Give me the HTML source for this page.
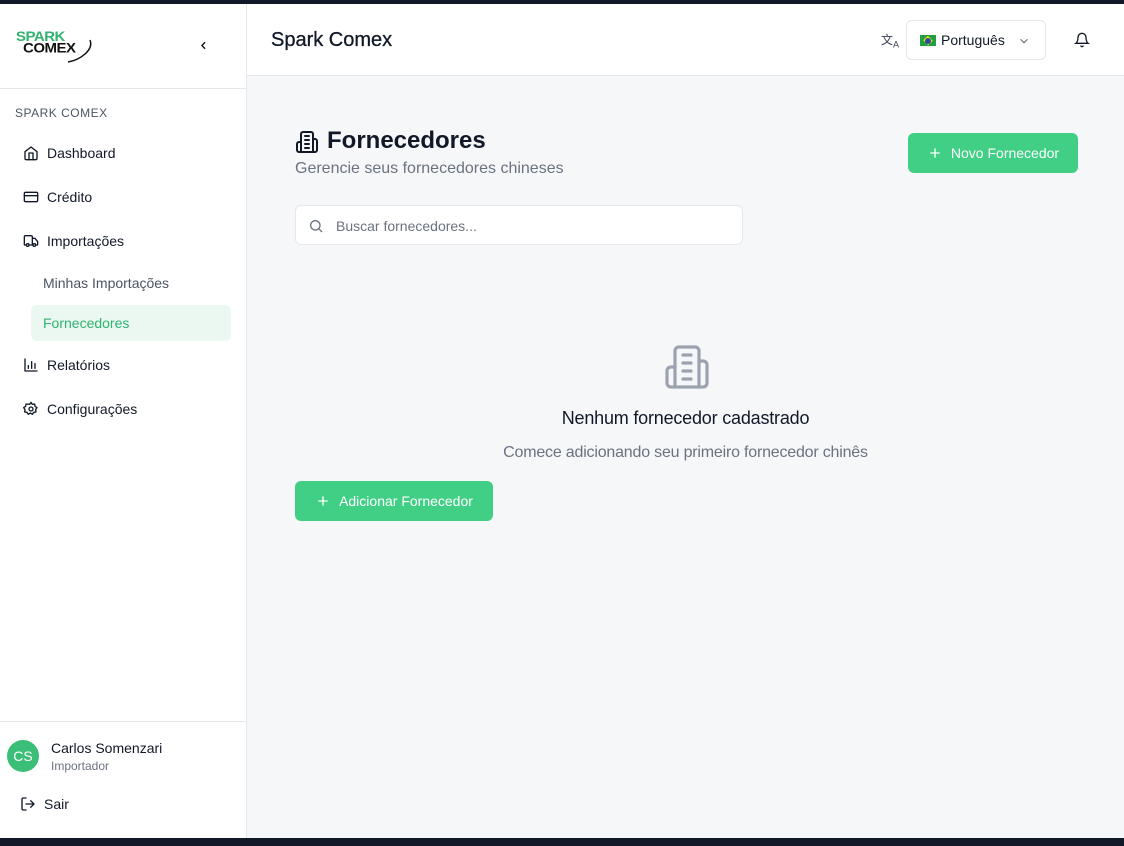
<!DOCTYPE html>
<html><head><meta charset="utf-8">
<style>
*{box-sizing:border-box;margin:0;padding:0}
body{width:1124px;height:846px;overflow:hidden;font-family:"Liberation Sans",Arial,sans-serif;background:#111827;position:relative}
.app{position:absolute;left:0;top:4px;width:1124px;height:834px;background:#f6f7f9}
.side{position:absolute;left:0;top:0;width:247px;height:834px;background:#fff;border-right:1px solid #e5e7eb}
.logo{position:absolute;left:0;top:0;width:247px;height:85px;border-bottom:1px solid #e5e7eb}
.sec{position:absolute;left:15px;top:102px;font-size:12px;color:#4b5563;letter-spacing:.5px}
.nav{position:absolute;left:23px;font-size:14px;color:#111827;display:flex;align-items:center;gap:8px}
.nav svg{width:16px;height:16px;fill:none;stroke:#111827;stroke-width:2;stroke-linecap:round;stroke-linejoin:round}
.sub{position:absolute;left:43px;font-size:14px;color:#4b5563}
.act{position:absolute;left:31px;top:301px;width:200px;height:36px;background:#ebf8f1;border-radius:6px}
.hdr{position:absolute;left:247px;top:0;right:0;height:72px;background:#fff;border-bottom:1px solid #e5e7eb}
.btn{position:absolute;background:#41cf86;color:#fff;font-size:14px;border-radius:6px;display:flex;align-items:center;justify-content:center;gap:8px}
.btn svg{width:16px;height:16px;stroke:#fff;stroke-width:2;fill:none}
</style></head><body>
<div class="app">
<div class="side">
 <div class="logo">
  <div style="position:absolute;left:16px;top:27px;font-weight:900;font-size:15px;line-height:12px;letter-spacing:-.5px;transform:scaleY(.95)">
   <div style="color:#2fb36e">SPARK</div><div style="color:#111;margin-left:7px">COMEX</div>
  </div>
  <svg style="position:absolute;left:62px;top:30px" width="34" height="30" viewBox="0 0 34 30"><path d="M6 28 C18 26 32 16 28 6" stroke="#111" stroke-width="1.5" fill="none"/></svg>
  <svg style="position:absolute;left:197px;top:35px" width="13" height="13" viewBox="0 0 24 24"><path d="M15 18l-6-6 6-6" stroke="#111" stroke-width="2.5" fill="none"/></svg>
 </div>
 <div class="sec">SPARK COMEX</div>
 <div class="nav" style="top:141px"><svg viewBox="0 0 24 24"><path d="M3 10l9-7 9 7v10a2 2 0 0 1-2 2H5a2 2 0 0 1-2-2z"/><path d="M9 22V12h6v10"/></svg>Dashboard</div>
 <div class="nav" style="top:185px"><svg viewBox="0 0 24 24"><rect x="2" y="5" width="20" height="14" rx="2"/><path d="M2 10h20"/></svg>Crédito</div>
 <div class="nav" style="top:229px"><svg viewBox="0 0 24 24"><path d="M14 18V6a2 2 0 0 0-2-2H4a2 2 0 0 0-2 2v11a1 1 0 0 0 1 1h2M15 18H9M19 18h2a1 1 0 0 0 1-1v-3.6a1 1 0 0 0-.2-.6l-3.5-4.4A1 1 0 0 0 17.5 8H14"/><circle cx="17" cy="18" r="2"/><circle cx="7" cy="18" r="2"/></svg>Importações</div>
 <div class="sub" style="top:271px">Minhas Importações</div>
 <div class="act"></div>
 <div class="sub" style="top:311px;color:#2fb36e">Fornecedores</div>
 <div class="nav" style="top:353px"><svg viewBox="0 0 24 24"><path d="M3 3v18h18M8 17v-4M13 17V7M18 17v-7"/></svg>Relatórios</div>
 <div class="nav" style="top:397px"><svg viewBox="0 0 24 24"><circle cx="12" cy="12" r="3"/><path d="M12 2l2 3 3.5-.5.5 3.5 3 2-2 3 .5 3.5-3.5.5-2 3-3-2-3 2-2-3-3.5-.5.5-3.5-2-3 3-2 .5-3.5L10 5z"/></svg>Configurações</div>
 <div style="position:absolute;left:0;top:717px;width:246px;border-top:1px solid #e5e7eb"></div>
 <div style="position:absolute;left:7px;top:736px;width:32px;height:32px;border-radius:50%;background:#3bbf78;color:#fff;font-size:14px;display:flex;align-items:center;justify-content:center">CS</div>
 <div style="position:absolute;left:51px;top:736px;font-size:14px;color:#111827">Carlos Somenzari</div>
 <div style="position:absolute;left:51px;top:755px;font-size:12px;color:#6b7280">Importador</div>
 <div class="nav" style="top:792px;left:20px"><svg viewBox="0 0 24 24"><path d="M9 21H5a2 2 0 0 1-2-2V5a2 2 0 0 1 2-2h4M16 17l5-5-5-5M21 12H9"/></svg>Sair</div>
</div>
<div class="hdr">
 <div style="position:absolute;left:24px;top:25px;font-size:20px;color:#111827;-webkit-text-stroke:.3px #111827">Spark Comex</div>
 <div style="position:absolute;left:634px;top:27px;font-size:12px;color:#374151">文<sub style="font-size:9px">A</sub></div>
 <div style="position:absolute;left:659px;top:16px;width:140px;height:40px;border:1px solid #e5e7eb;border-radius:6px;font-size:14px;color:#111827;display:flex;align-items:center;padding-left:13px;gap:5px">
  <span style="display:inline-block;width:16px;height:11px;background:#229e45;position:relative"><span style="position:absolute;left:3px;top:1px;width:10px;height:9px;background:#f8e509;transform:rotate(45deg) scale(.7)"></span><span style="position:absolute;left:5px;top:3px;width:6px;height:6px;border-radius:50%;background:#2b49a3"></span></span>Português
  <svg style="position:absolute;right:14px;top:13px" width="14" height="14" viewBox="0 0 24 24"><path d="M6 9l6 6 6-6" stroke="#6b7280" stroke-width="2" fill="none"/></svg>
 </div>
 <svg style="position:absolute;left:827px;top:28px" width="16" height="16" viewBox="0 0 24 24" fill="none" stroke="#111827" stroke-width="2" stroke-linecap="round"><path d="M6 8a6 6 0 0 1 12 0c0 7 3 9 3 9H3s3-2 3-9M10.3 21a1.9 1.9 0 0 0 3.4 0"/></svg>
</div>
<svg style="position:absolute;left:295px;top:126px" width="24" height="24" viewBox="0 0 24 24" fill="none" stroke="#111827" stroke-width="2" stroke-linecap="round" stroke-linejoin="round"><path d="M6 22V4a2 2 0 0 1 2-2h8a2 2 0 0 1 2 2v18Z"/><path d="M6 12H4a2 2 0 0 0-2 2v6a2 2 0 0 0 2 2h2M18 9h2a2 2 0 0 1 2 2v9a2 2 0 0 1-2 2h-2M10 6h4M10 10h4M10 14h4M10 18h4"/></svg>
<div style="position:absolute;left:327px;top:123px;font-size:24px;font-weight:bold;color:#111827">Fornecedores</div>
<div style="position:absolute;left:295px;top:156px;font-size:16px;color:#6b7280">Gerencie seus fornecedores chineses</div>
<div class="btn" style="left:908px;top:129px;width:170px;height:40px"><svg viewBox="0 0 24 24"><path d="M12 5v14M5 12h14"/></svg>Novo Fornecedor</div>
<div style="position:absolute;left:295px;top:201px;width:448px;height:40px;background:#fff;border:1px solid #e5e7eb;border-radius:6px;font-size:14px;color:#6b7280;padding:12px 0 0 40px">Buscar fornecedores...
 <svg style="position:absolute;left:12px;top:12px" width="16" height="16" viewBox="0 0 24 24" fill="none" stroke="#6b7280" stroke-width="2"><circle cx="11" cy="11" r="7"/><path d="M21 21l-4.3-4.3"/></svg></div>
<svg style="position:absolute;left:663px;top:339px" width="48" height="48" viewBox="0 0 24 24" fill="none" stroke="#9ca3af" stroke-width="1.6" stroke-linecap="round" stroke-linejoin="round"><path d="M6 22V4a2 2 0 0 1 2-2h8a2 2 0 0 1 2 2v18Z"/><path d="M6 12H4a2 2 0 0 0-2 2v6a2 2 0 0 0 2 2h2M18 9h2a2 2 0 0 1 2 2v9a2 2 0 0 1-2 2h-2M10 6h4M10 10h4M10 14h4M10 18h4"/></svg>
<div style="position:absolute;left:247px;width:877px;top:404px;text-align:center;font-size:18px;color:#111827;letter-spacing:-.2px">Nenhum fornecedor cadastrado</div>
<div style="position:absolute;left:247px;width:877px;top:440px;text-align:center;font-size:16px;color:#6b7280;letter-spacing:-.2px">Comece adicionando seu primeiro fornecedor chinês</div>
<div class="btn" style="left:295px;top:477px;width:198px;height:40px"><svg viewBox="0 0 24 24"><path d="M12 5v14M5 12h14"/></svg>Adicionar Fornecedor</div>
</div>
</body></html>
